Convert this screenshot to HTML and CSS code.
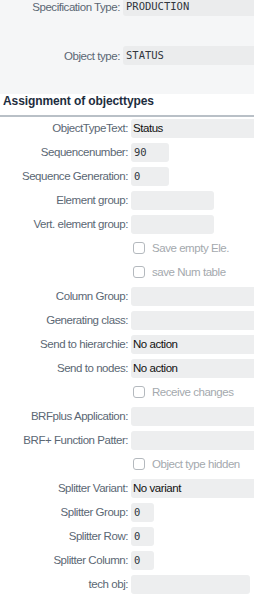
FILE: index.html
```html
<!DOCTYPE html>
<html lang="en">
<head>
    <meta charset="UTF-8">
    <meta name="viewport" content="width=device-width, initial-scale=1.0">
    <title>Object types</title>
    <link rel="stylesheet" href="styles.css">
</head>
<body>

    <!-- Header data -->
    <div class="head-form">
        <div class="row first">
            <label>Specification Type:</label>
            <div class="field mono wide">PRODUCTION</div>
        </div>
        <div class="row">
            <label>Object type:</label>
            <div class="field mono wide">STATUS</div>
        </div>
    </div>

    <!-- Assignment section -->
    <div class="section-title">Assignment of objecttypes</div>

    <div class="form">
        <div class="row"><label>ObjectTypeText:</label><div class="field wide">Status</div></div>
        <div class="row"><label>Sequencenumber:</label><div class="field mono short">90</div></div>
        <div class="row"><label>Sequence Generation:</label><div class="field mono short">0</div></div>
        <div class="row"><label>Element group:</label><div class="field medium"></div></div>
        <div class="row"><label>Vert. element group:</label><div class="field medium"></div></div>
        <div class="row"><span></span><div class="check"><span class="box"></span>Save empty Ele.</div></div>
        <div class="row"><span></span><div class="check"><span class="box"></span>save Num table</div></div>
        <div class="row"><label>Column Group:</label><div class="field wide"></div></div>
        <div class="row"><label>Generating class:</label><div class="field wide"></div></div>
        <div class="row"><label>Send to hierarchie:</label><div class="field wide">No action</div></div>
        <div class="row"><label>Send to nodes:</label><div class="field wide">No action</div></div>
        <div class="row"><span></span><div class="check"><span class="box"></span>Receive changes</div></div>
        <div class="row"><label>BRFplus Application:</label><div class="field wide"></div></div>
        <div class="row"><label>BRF+ Function Patter:</label><div class="field wide"></div></div>
        <div class="row"><span></span><div class="check"><span class="box"></span>Object type hidden</div></div>
        <div class="row"><label>Splitter Variant:</label><div class="field wide">No variant</div></div>
        <div class="row"><label>Splitter Group:</label><div class="field mono tiny">0</div></div>
        <div class="row"><label>Splitter Row:</label><div class="field mono tiny">0</div></div>
        <div class="row"><label>Splitter Column:</label><div class="field mono tiny">0</div></div>
        <div class="row"><label>tech obj:</label><div class="field long"></div></div>
    </div>

</body>
</html>
```

FILE: styles.css
```css
/* Page */
body, html {
    margin: 0;
    padding: 0;
    overflow: hidden;
    background: #ffffff;
    font-family: "Liberation Sans", Arial, sans-serif;
    font-size: 11.5px;
    letter-spacing: -0.45px;
}

/* Rows: label column + field */
.row {
    display: grid;
    grid-template-columns: 128px 1fr;
    column-gap: 3px;
    align-items: center;
    height: 20px;
    margin-bottom: 4px;
}

.row label {
    text-align: right;
    color: #5b6774;
    white-space: nowrap;
}

/* Header data on grey */
.head-form {
    background: #f5f6f7;
    height: 94px;
    overflow: hidden;
}

.head-form .row {
    grid-template-columns: 120px 1fr;
    height: 19px;
    margin-bottom: 30px;
}

.head-form .row.first {
    margin-top: -3px;
}

.head-form .field {
    background: #ebeced;
    padding-left: 3px;
}

/* Section title */
.section-title {
    font-weight: bold;
    font-size: 12px;
    letter-spacing: -0.1px;
    color: #1d2d3e;
    height: 21px;
    line-height: 15px;
    padding-left: 3px;
    border-bottom: 2px solid #b9c0c7;
}

.form {
    padding-top: 1px;
}

/* Input-like fields */
.field {
    box-sizing: border-box;
    height: 19px;
    line-height: 19px;
    background: #edeeef;
    border-radius: 3px;
    padding-left: 2px;
    color: #111111;
    white-space: nowrap;
    overflow: hidden;
}

.field.mono {
    font-family: "DejaVu Sans Mono", "Liberation Mono", monospace;
    font-size: 10.5px;
    letter-spacing: 0;
    padding-left: 3px;
    color: #30363d;
}

.field.wide { border-radius: 3px 0 0 3px; }
.field.short { width: 38px; }
.field.medium { width: 83px; }
.field.tiny { width: 23px; }
.field.long { width: 119px; }

/* Disabled checkboxes */
.check {
    display: flex;
    align-items: center;
    gap: 7px;
    padding-left: 2px;
    color: #a4a9ae;
    white-space: nowrap;
}

.check .box {
    width: 10px;
    height: 10px;
    border: 1px solid #b4b9be;
    border-radius: 3px;
    background: #ffffff;
}
```
